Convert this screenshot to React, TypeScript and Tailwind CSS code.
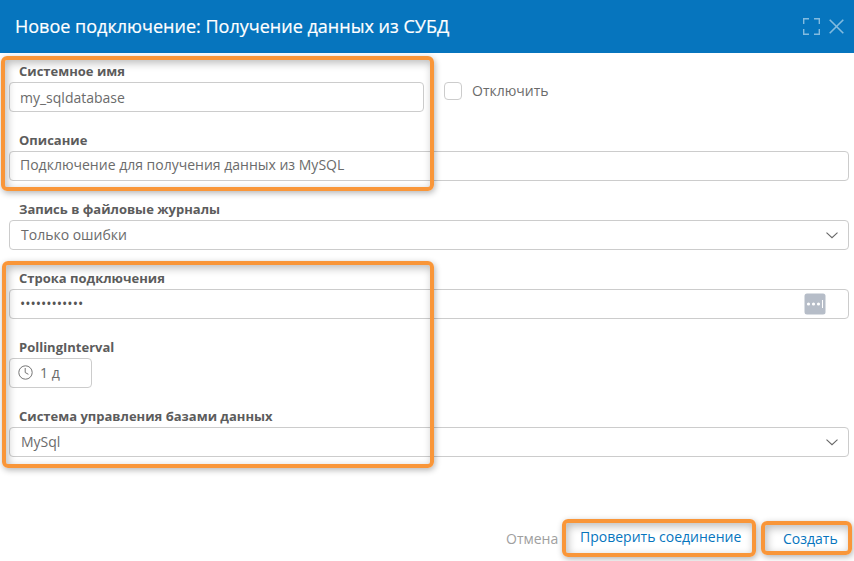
import type { ReactNode } from "react";

const box = "h-[30px] rounded-[4px] border border-[#cccccc] bg-white flex items-center";

function Field({ label, children }: { label: string; children: ReactNode }) {
  return (
    <div className="h-[69px]">
      <div className="h-[21px] pl-[10px] text-[13px] leading-[20px] font-bold text-[#5c5c5c] whitespace-nowrap">{label}</div>
      {children}
    </div>
  );
}

function Highlight({ className }: { className: string }) {
  return (
    <div
      className={
        "pointer-events-none absolute rounded-[6px] border-[4px] border-[#f99639] shadow-[1px_2px_6px_rgba(0,0,0,0.3),inset_2px_3px_8px_rgba(0,0,0,0.27)] " +
        className
      }
    />
  );
}

function Chevron() {
  return (
    <svg className="mr-[10px] ml-auto" width="13" height="8" viewBox="0 0 13 8" fill="none" stroke="#666666" strokeWidth="1.1">
      <path d="M1.5 1.7 7 6.7 12.5 1.7" />
    </svg>
  );
}

export default function App() {
  return (
    <div className="relative flex h-[561px] w-[854px] flex-col overflow-hidden bg-white font-['Open_Sans',sans-serif] text-[14px] text-[#6b6b6b]">
      <header className="flex h-[53px] shrink-0 items-center bg-[#0675be] pr-[10px] pl-[15px] text-white">
        <h1 className="pb-[2px] text-[18px] leading-[24px] tracking-[0.01px] whitespace-nowrap [-webkit-text-stroke:0.2px_white]">
          Новое подключение: Получение данных из СУБД
        </h1>
        <div className="ml-auto flex items-center gap-[9px]">
          <svg width="17" height="17" viewBox="0 0 17 17" fill="none" stroke="#83bbdf" strokeWidth="1.4">
            <path d="M.7 6V.7H6M11 .7h5.3V6M16.3 11v5.3H11M6 16.3H.7V11" />
          </svg>
          <svg className="mb-px" width="15" height="15" viewBox="0 0 15 15" fill="none" stroke="#83bbdf" strokeWidth="1.6">
            <path d="m.7.7 13.6 13.6M14.3.7.7 14.3" />
          </svg>
        </div>
      </header>

      <main className="pt-[8px] pr-[5px] pl-[9px]">
        <div className="flex">
          <div className="w-[415px]">
            <Field label="Системное имя">
              <div className={box + " pl-[10px]"}>my_sqldatabase</div>
            </Field>
          </div>
          <label className="mt-[21px] ml-[20px] flex h-[18px] items-center gap-[10px]">
            <span className="h-[18px] w-[18px] rounded-[4px] border border-[#cccccc] bg-white" />
            <span className="pb-[2px]">Отключить</span>
          </label>
        </div>
        <Field label="Описание">
          <div className={box + " pb-[3px] pl-[10px]"}>Подключение для получения данных из MySQL</div>
        </Field>
        <Field label="Запись в файловые журналы">
          <div className={box + " pl-[11px]"}>
            <span className="pb-[2px]">Только ошибки</span>
            <Chevron />
          </div>
        </Field>
        <Field label="Строка подключения">
          <div className={box + " pr-[22px] pl-[10px]"}>
            <span className="pb-px text-[#555555]">••••••••••••</span>
            <svg className="ml-auto" width="22" height="22" viewBox="0 0 22 22">
              <rect x=".5" y=".5" width="21" height="21" rx="2.5" fill="#b6bdc8" />
              <g fill="#fff">
                <circle cx="4.5" cy="11" r="1.6" />
                <circle cx="9.5" cy="11" r="1.6" />
                <circle cx="14.5" cy="11" r="1.6" />
                <path d="M18 7h1v8h-1z" />
              </g>
            </svg>
          </div>
        </Field>
        <Field label="PollingInterval">
          <div className={box + " w-[83px] gap-[7px] pb-[2px] pl-[8px]"}>
            <svg width="15" height="15" viewBox="0 0 15 15" fill="none" stroke="#747474" strokeWidth="1">
              <circle cx="7.5" cy="7.5" r="6.7" />
              <path d="M7.2 3v4.5l3.2 1.8" />
            </svg>
            1 д
          </div>
        </Field>
        <Field label="Система управления базами данных">
          <div className={box + " pl-[11px]"}>
            <span className="pb-[2px]">MySql</span>
            <Chevron />
          </div>
        </Field>
      </main>

      <footer className="mt-[45px] flex h-[42px] items-start pl-[506px] leading-[20px] text-[#0675be]">
        <button className="mt-[9px] w-[56px] text-left text-[#a0a0a0]">Отмена</button>
        <button className="relative ml-[18px] mt-[7px] w-[163px] text-left whitespace-nowrap">
          Проверить соединение
          <Highlight className="-top-[8px] -left-[18px] h-[38px] w-[194px]" />
        </button>
        <button className="relative ml-[40px] mt-[9px] w-[56px] text-left whitespace-nowrap">
          Создать
          <Highlight className="-top-[8px] -left-[22px] h-[34px] w-[91px]" />
        </button>
      </footer>

      <Highlight className="top-[56px] left-[1px] h-[135px] w-[433px]" />
      <Highlight className="top-[261px] left-[2px] h-[207px] w-[432px]" />
    </div>
  );
}
